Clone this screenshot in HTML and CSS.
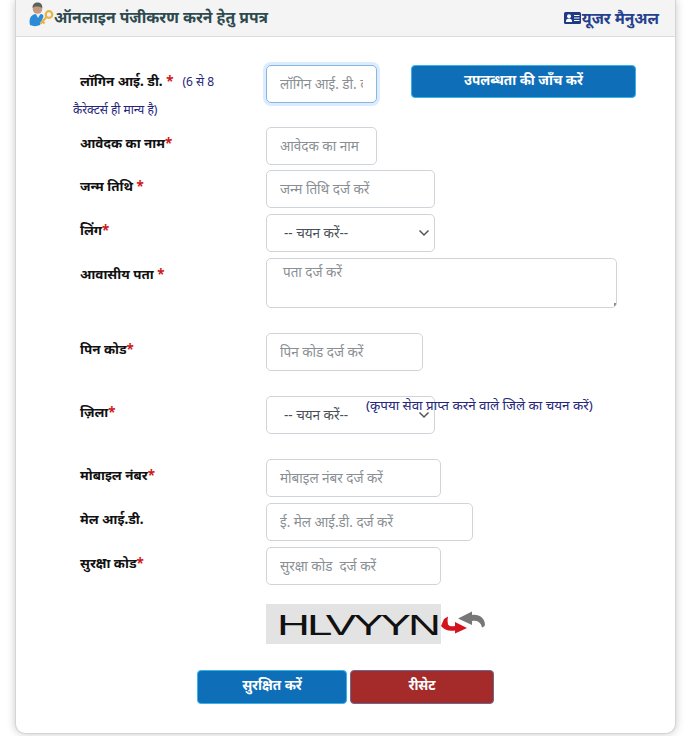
FILE: index.html
```html
<!DOCTYPE html>
<html lang="hi">
<head>
<meta charset="utf-8">
<title>ऑनलाइन पंजीकरण</title>
<link rel="stylesheet" href="styles.css">
</head>
<body>
<div class="card">
  <header class="head">
    <h1 class="title">
      <svg class="user-ico" width="25" height="25" viewBox="0 0 25 25">
        <path d="M1 23c-1.500-6 1-10 5-11l3 1 3-1c1.500 0 2.500 1 2.500 2.500L11 23c-3 1.500-7 1.500-10 0z" fill="#2c8bd8"/>
        <path d="M7 12l2 4 2.500-4z" fill="#e9eef2"/>
        <circle cx="8.500" cy="7" r="4.800" fill="#c69a7c"/>
        <path d="M3.500 6c0-4.500 3-6 6-5.500s4 3 3.800 5.500c-2-1.500-7-2.500-9.800 0z" fill="#56635f"/>
        <circle cx="20" cy="12.500" r="3.300" fill="none" stroke="#e9b347" stroke-width="2.200"/>
        <path d="M17.500 15l-6 6.500M13.500 19.500l2 2" fill="none" stroke="#e9b347" stroke-width="2.200"/>
      </svg>
      <span>ऑनलाइन पंजीकरण करने हेतु प्रपत्र</span>
    </h1>
    <a class="manual" href="#">
      <svg width="17" height="12" viewBox="0 0 17 12">
        <rect width="17" height="12" rx="1.500" fill="#1e3a84"/>
        <circle cx="5" cy="4.200" r="2" fill="#fff"/>
        <path d="M1.800 10c0-2.500 1.500-3.500 3.200-3.500s3.200 1 3.200 3.500z" fill="#fff"/>
        <path d="M10 3.500h5.500M10 6h5.500M10 8.500h5.500" stroke="#fff" stroke-width="1"/>
      </svg>
      <span>यूजर मैनुअल</span>
    </a>
  </header>

  <form class="form">
    <div class="row row-first">
      <div class="label label-wrap"><b>लॉगिन आई. डी. <i>*</i></b><span class="hint-a">(6 से 8</span><span class="hint-b">कैरेक्टर्स ही मान्य है)</span></div>
      <input class="field w-short focus" placeholder="लॉगिन आई. डी. दर्ज करें">
      <button type="button" class="btn check">उपलब्धता की जाँच करें</button>
    </div>
    <div class="row gap-24">
      <div class="label"><b>आवेदक का नाम<i>*</i></b></div>
      <input class="field w-short" placeholder="आवेदक का नाम">
    </div>
    <div class="row gap-5">
      <div class="label"><b>जन्म तिथि <i>*</i></b></div>
      <input class="field w-168" placeholder="जन्म तिथि दर्ज करें">
    </div>
    <div class="row gap-6">
      <div class="label"><b>लिंग<i>*</i></b></div>
      <div class="select w-168"><span>-- चयन करें--</span><svg class="chev" width="12" height="8" viewBox="0 0 12 8"><path d="M1.500 1.500L6 6l4.500-4.500" fill="none" stroke="#555" stroke-width="1.500"/></svg></div>
    </div>
    <div class="row gap-6">
      <div class="label"><b>आवासीय पता <i>*</i></b></div>
      <textarea class="field area" placeholder="पता दर्ज करें"></textarea>
    </div>
    <div class="row gap-25">
      <div class="label"><b>पिन कोड<i>*</i></b></div>
      <input class="field w-157" placeholder="पिन कोड दर्ज करें">
    </div>
    <div class="row gap-25">
      <div class="label"><b>ज़िला<i>*</i></b></div>
      <div class="select w-168"><span>-- चयन करें--</span><svg class="chev" width="12" height="8" viewBox="0 0 12 8"><path d="M1.500 1.500L6 6l4.500-4.500" fill="none" stroke="#555" stroke-width="1.500"/></svg></div>
      <span class="district-note">(कृपया सेवा प्राप्त करने वाले जिले का चयन करें)</span>
    </div>
    <div class="row gap-25">
      <div class="label"><b>मोबाइल नंबर<i>*</i></b></div>
      <input class="field w-175" placeholder="मोबाइल नंबर दर्ज करें">
    </div>
    <div class="row gap-6">
      <div class="label"><b>मेल आई.डी.</b></div>
      <input class="field w-207" placeholder="ई. मेल आई.डी. दर्ज करें">
    </div>
    <div class="row gap-6">
      <div class="label"><b>सुरक्षा कोड<i>*</i></b></div>
      <input class="field w-175" placeholder="सुरक्षा कोड  दर्ज करें">
    </div>
    <div class="captcha-row">
      <div class="captcha"><span>HLVYYN</span></div>
      <svg class="refresh" width="46" height="24" viewBox="0 0 46 24">
        <path d="M44 15c0-7-6-11-13-10V1.500L17 8.500l14 6.500v-4c4-1 7 0 9 3.500l1 3c2-.5 3-1.500 3-3.500z" fill="#777"/>
        <path d="M0 16l3-7 4-2.500-.5 4 .5 4c1.500 2 4 2 7 1.500v-4l12 6-12 5.500v-3c-6 1-11-.5-14-4.500z" fill="#d3141c"/>
      </svg>
    </div>
    <div class="actions">
      <button type="button" class="btn save">सुरक्षित करें</button>
      <button type="reset" class="btn reset">रीसेट</button>
    </div>
  </form>
</div>
</body>
</html>
```

FILE: styles.css
```css
* { box-sizing: border-box; }
html, body { margin: 0; height: 736px; overflow: hidden; background: #fff; }
body { font-family: "Noto Sans", "DejaVu Sans", sans-serif; font-size: 14px; color: #212529; }
.card {
  margin-left: 15px; width: 661px; height: 734px;
  border: 1px solid #d4d4d4; border-top: 0; border-radius: 0 0 10px 10px;
  box-shadow: 0 0 8px rgba(0,0,0,.22); background: #fff;
}
.head {
  height: 37px; background: #f4f4f4; border-bottom: 1px solid #dcdcdc;
  display: flex; align-items: center; justify-content: space-between;
  padding: 0 16px 0 14px;
}
.title { margin: 0; font-size: 15.700px; font-weight: 700; color: #2f4a4f; display: flex; align-items: center; line-height: 1; }
.user-ico { margin-top: -7px; margin-left: -1px; }
.manual { display: flex; align-items: center; gap: 1px; color: #24408e; text-decoration: none; font-size: 15.500px; font-weight: 700; }
.form { padding-left: 64px; }
.row { display: flex; align-items: flex-start; position: relative; }
.row-first { margin-top: 28px; height: 38px; }
.gap-5 { margin-top: 5px; }
.gap-6 { margin-top: 6px; }
.gap-24 { margin-top: 24px; }
.gap-25 { margin-top: 25px; }
.label { width: 186px; flex: none; padding-top: 5px; line-height: 22px; }
.label b { font-weight: 700; color: #111; font-size: 13.400px; }
.label i { font-style: normal; color: #d01818; }
.hint-a { color: #25257a; font-size: 12px; margin-left: 9px; }
.hint-b { display: block; margin: 7px 0 0 -7px; color: #25257a; font-size: 12px; line-height: 20px; white-space: nowrap; }
.field {
  height: 38px; border: 1px solid #ced4da; border-radius: 5px; padding: 0 13px;
  font: 13.500px "Noto Sans", "DejaVu Sans", sans-serif; color: #495057; background-color: #fff; outline: 0;
}
.field::placeholder { color: #8a8f94; opacity: 1; }
.focus { border-color: #86b7e0; box-shadow: 0 0 0 3px rgba(13,110,253,.14); }
.w-short { width: 111px; }
.w-157 { width: 157px; }
.w-168 { width: 169px; }
.w-175 { width: 175px; }
.w-207 { width: 207px; }
.area {
  width: 351px; height: 50px; padding: 2px 16px; resize: none; line-height: 22px;
  background-image: linear-gradient(#888, #888);
  background-size: 2px 3px; background-repeat: no-repeat; background-position: right 0 bottom 1px;
}
.select {
  height: 38px; border: 1px solid #ced4da; border-radius: 5px; padding: 0 4px 0 17px;
  display: flex; align-items: center; justify-content: space-between; color: #495057; font-size: 13.500px;
}
.district-note { position: absolute; left: 286px; top: -1px; color: #25257a; font-size: 13.400px; line-height: 20px; white-space: nowrap; }
.btn {
  font: 700 13.500px "Noto Sans", "DejaVu Sans", sans-serif; color: #fff; border-radius: 4px;
  display: flex; align-items: flex-start; justify-content: center; padding: 5px 0 0; cursor: pointer;
}
.check { width: 225px; height: 33px; margin-left: 34px; background: #0e6eb8; border: 1px solid #36b4ea; }
.captcha-row { display: flex; align-items: center; margin: 19px 0 0 186px; }
.captcha {
  width: 175px; height: 40px; background: #e3e3e3; overflow: hidden; padding: 2px 0 0 11px;
  font: 400 30px "Liberation Sans", sans-serif; color: #111; display: flex; align-items: center;
}
.captcha span { display: block; letter-spacing: -2px; transform: scaleX(1.520); transform-origin: left center; white-space: nowrap; }
.refresh { margin: -5px 0 0 0; }
.actions { display: flex; gap: 3px; margin: 26px 0 0 117px; }
.save { width: 150px; height: 34px; background: #0e6eb8; border: 1px solid #36b4ea; }
.reset { width: 144px; height: 34px; background: #a52a2a; border: 1px solid #6b6b8f; }
```
